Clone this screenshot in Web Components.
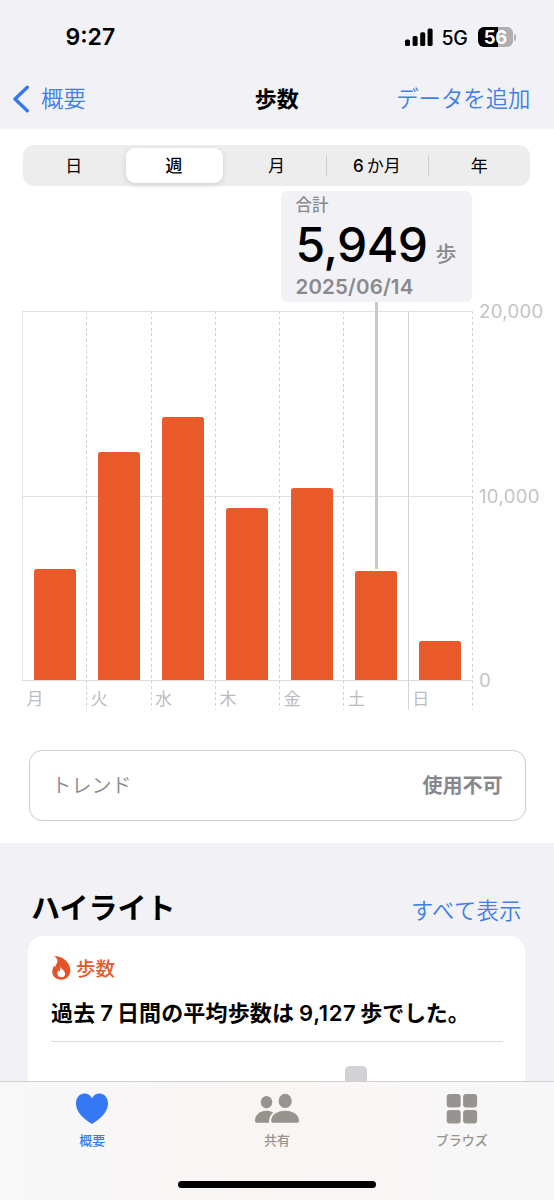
<!DOCTYPE html>
<html lang="ja">
<head>
<meta charset="utf-8">
<title>歩数</title>
<style>
body{margin:0;width:554px;height:1200px;overflow:hidden;background:#f1f1f6;color:#000;font-family:Inter,"Noto Sans CJK JP",sans-serif}
</style>
</head>
<body>
<health-app></health-app>
<script>
const define = (name, html, setup) => customElements.define(name, class extends HTMLElement {
  connectedCallback() {
    if (this.shadowRoot) return;
    const t = document.createElement('template');
    t.innerHTML = html;
    this.attachShadow({mode: 'open'}).append(t.content.cloneNode(true));
    if (setup) setup(this, this.shadowRoot);
  }
});

define('status-bar', `<style>
:host{display:flex;align-items:center;height:74px;padding:0 41px 0 65.5px;box-sizing:border-box}
.time{font-size:23px;font-weight:600;line-height:30px;flex:1}
.signal{margin-right:9px}
.net{font-size:19.5px;font-weight:450;line-height:24px;width:36px;letter-spacing:-.3px;padding-top:1px}
.bat{width:35.5px;height:20px;border-radius:6px;background:linear-gradient(90deg,#000 20px,#aeaeb3 20px);color:#fff;font-size:18.5px;font-weight:700;line-height:20px;text-align:center;letter-spacing:-.5px}
.cap{width:2px;height:7px;border-radius:0 2px 2px 0;background:#b4b4b8;margin-left:1px;margin-right:-3px}
</style>
<span class="time">9:27</span>
<svg class="signal" width="28" height="19" viewBox="0 0 28 19"><rect x="0" y="11.5" width="5" height="6.5" rx="1.6"/><rect x="7.6" y="8" width="5" height="10" rx="1.6"/><rect x="15.2" y="4.3" width="5" height="13.7" rx="1.6"/><rect x="22.6" y=".5" width="5" height="17.5" rx="1.6"/></svg>
<span class="net">5G</span><span class="bat">56</span><span class="cap"></span>`);

define('nav-bar', `<style>
:host{display:grid;grid-template-columns:1fr auto 1fr;align-items:center;height:55px;padding:0 23.5px 6px 12px;box-sizing:border-box;line-height:32px}
.back,.add{color:#3e7fe8;font-size:22.4px;font-weight:350}
.back{display:flex;align-items:center;gap:11px}
.title{font-size:22px;font-weight:600;padding-left:11px}
.add{text-align:right}
</style>
<span class="back"><svg width="18" height="28" viewBox="0 0 18 28" fill="none" stroke="#3478f0" stroke-width="3.3" stroke-linecap="round" stroke-linejoin="round"><path d="M15.3 2.2 3 14l12.3 11.8"/></svg><span>概要</span></span>
<span class="title">歩数</span><span class="add">データを追加</span>`);

define('range-picker', `<style>
:host{display:grid;grid-template-columns:repeat(5,1fr);height:41px;margin:0 24px 0 23px;border-radius:11px;background:#ededee;box-sizing:border-box;font-size:17px;line-height:24px}
span{display:flex;align-items:center;justify-content:center;position:relative}
span:first-child{padding-right:2px}
.on{background:#fff;margin:3px 3px 3px 2px;border-radius:9px;box-shadow:0 2px 6px rgba(0,0,0,.12);font-weight:500;padding-right:1px}
.sep::before{content:"";position:absolute;left:-1px;top:10px;height:21px;width:1px;background:#cfcfd2}
.six{padding-right:2px}
b{font-weight:500;margin-right:3px}
</style><span>日</span><span class="on">週</span><span>月</span><span class="sep six"><b>6</b>か月</span><span class="sep">年</span>`);

define('value-callout', `<style>
:host{display:block;width:191px;height:111px;border-radius:6px;background:#f1f1f6;box-sizing:border-box;padding:4px 0 0 14.5px;color:#8a8a8e;font-weight:500}
.k{font-size:16.5px;line-height:20px}
.v{display:flex;align-items:baseline;height:60px;line-height:60px;font-size:21px;white-space:nowrap}
.v b{font-size:48px;font-weight:460;color:#000;width:140px;letter-spacing:-.5px}
.v span{position:relative;top:-1px}
.d{font-size:20.5px;line-height:24px;font-weight:600;letter-spacing:.15px}
</style><div class="k">合計</div><div class="v"><b>5,949</b><span>歩</span></div><div class="d">2025/06/14</div>`);

define('day-column', `<style>
:host{display:flex;flex-direction:column;box-sizing:border-box;height:399px;background:repeating-linear-gradient(180deg,#d0d0d4 0 2.8px,transparent 2.8px 5.6px) 0 0/1px 100% no-repeat}
:host([line=first]){background:linear-gradient(#e4e4e7,#e4e4e7) 0 0/1px 369px no-repeat}
:host([line=solid]){background:linear-gradient(#d4d4d7,#d4d4d7) 0 0/1px 100% no-repeat}
.plot{flex:none;height:369px;display:flex;align-items:flex-end;padding-left:11.6px}
.bar{width:42px;background:#eb5a2b;border-radius:2.5px 2.5px 0 0}
.day{font-size:17px;line-height:24px;color:#bcbcc0;padding:7px 0 0 4.5px}
</style><div class="plot"><div class="bar"></div></div><div class="day"><slot></slot></div>`,
(el, root) => { root.querySelector('.bar').style.height = el.getAttribute('h') + 'px'; });

define('steps-chart', `<style>
:host{display:grid;grid-template-columns:451px 1fr;height:399px;margin-left:22px;position:relative}
.cols{display:grid;grid-template-columns:repeat(7,64.3px);background:linear-gradient(#e2e2e5,#e2e2e5) 0 0/100% 1px no-repeat,linear-gradient(#e2e2e5,#e2e2e5) 0 185px/100% 1px no-repeat,linear-gradient(#dcdcdf,#dcdcdf) 0 369px/100% 1px no-repeat,repeating-linear-gradient(180deg,#d0d0d4 0 2.8px,transparent 2.8px 5.6px) 450px 0/1px 100% no-repeat}
.axis{display:flex;flex-direction:column;justify-content:space-between;height:393px;margin-top:-12px;padding-left:6px;font-size:18.5px;line-height:24px;color:#c3c3c7;font-weight:440;letter-spacing:.35px}
.pin{position:absolute;left:353px;top:-9px;width:3px;height:267px;background:#c9c9cc}
value-callout{position:absolute;left:259px;top:-120px}
</style><div class="cols">
<day-column line="first" h="111">月</day-column><day-column h="228">火</day-column><day-column h="263">水</day-column><day-column h="172">木</day-column><day-column h="192">金</day-column><day-column h="109">土</day-column><day-column line="solid" h="39">日</day-column></div>
<div class="axis"><span>20,000</span><span>10,000</span><span>0</span></div>
<div class="pin"></div><value-callout></value-callout>`);

define('trend-card', `<style>
:host{display:flex;justify-content:space-between;align-items:center;height:71px;margin:39.5px 28.5px 0;border:1.5px solid #cdcdd1;border-radius:13px;box-sizing:border-box;padding:2px 22px 0;color:#88888c;font-size:20px;line-height:28px}
.a{font-weight:350}.b{font-weight:600}
</style><span class="a">トレンド</span><span class="b">使用不可</span>`);

define('highlight-card', `<style>
:host{display:block;height:145px;margin:0 29px 0 28px;border-radius:15px 15px 0 0;background:#fff;padding:18px 22px 0 24px;box-sizing:border-box}
.h{display:flex;align-items:center;gap:5px;height:28px;color:#e35b2c;font-size:19.5px;font-weight:500}
.h span{margin-top:-2px}
.t{font-size:22px;font-weight:600;line-height:32px;margin:15px 0 0 -1px;padding-bottom:12px;border-bottom:1px solid #dadadd;white-space:nowrap;letter-spacing:.15px}
.n{margin:0 4px 0 5px;letter-spacing:-.1px}
.n.w{margin:0 4px 0 5px;letter-spacing:.6px}
.end{letter-spacing:-.15px}
.chip{width:22px;height:16px;background:#d1d1d6;border-radius:5px 5px 0 0;margin:24px 0 0 293px}
</style><div class="h"><svg width="19" height="24" viewBox="0 0 18.5 23.5"><path fill="#e35428" d="M2.200 0C10 0 17.900 6 17.900 14c0 5.500-3.900 9.300-8.900 9.300S.2 20 .2 15.500C.2 13 1.300 11.300 1.800 9.200c.4 .9 .7 1.400 1.200 1.700C3.600 8.600 5.500 6.800 5.300 5 5.100 3 3.900 1 2.200 0Z"/><path fill="#fff" d="M8.300 10.200c.7 2.900 4.500 3.900 4.500 7.100 0 2.200-1.600 3.500-3.800 3.500s-3.800-1.500-3.800-3.600c0-1.500.3-2.500.8-3.300.3.700.6 1.200 1.200 1.400.7-1.600 1.400-3 1.100-5.100Z"/></svg><span>歩数</span></div>
<div class="t">過去<span class="n">7</span>日間の平均歩数は<span class="n w">9,127</span><span class="end">歩でした。</span></div>
<div class="chip"></div>`);

define('highlight-section', `<style>
:host{display:block;height:238px;background:#f1f1f6;overflow:hidden}
header{display:flex;justify-content:space-between;align-items:center;height:93px;padding:38px 32px 0 31px;box-sizing:border-box}
h2{margin:0;font-size:29px;font-weight:700;line-height:40px}
.all{color:#3e7fe8;font-size:22.3px;font-weight:350;line-height:32px;padding-top:4px;letter-spacing:.4px}
</style><header><h2>ハイライト</h2><span class="all">すべて表示</span></header><highlight-card></highlight-card>`);

define('tab-item', `<style>
:host{display:flex;flex-direction:column;align-items:center;color:#97938f;font-size:13px;font-weight:500;line-height:18px}
::slotted(svg){display:block;margin-bottom:5px}
</style><slot name="icon"></slot><span><slot></slot></span>`);

define('tab-bar', `<style>
:host{display:flex;flex-direction:column;align-items:center;height:119px;border-top:1px solid #cfcfd2;box-sizing:border-box;background:linear-gradient(90deg,#f8f8f9,#f8f5f3 45%,#f9f6f5 65%,#f7f7f9)}
.tabs{display:grid;grid-template-columns:repeat(3,184.7px);height:99px;padding-top:10px;box-sizing:border-box}
.home{width:198px;height:7px;border-radius:4px;background:#000}
tab-item.on{color:#3c7eea}
</style><div class="tabs">
<tab-item class="on"><svg slot="icon" width="46" height="34" viewBox="0 0 46 34"><path fill="#3478f6" d="M23 32C19 29.500 7 22 7 11.500 7 5.500 10.800 1.500 15.500 1.500c3.500 0 6 1.800 7.500 4.800 1.500-3 4-4.800 7.500-4.800C35.200 1.500 39 5.500 39 11.500 39 22 27 29.500 23 32Z"/></svg>概要</tab-item>
<tab-item><svg slot="icon" width="46" height="34" viewBox="0 0 46 34" fill="#97938f"><ellipse cx="12.500" cy="10.200" rx="5.700" ry="6.200"/><path d="M1 28.500C1 23 6 18.800 12.500 18.800c2.700 0 4.600.5 6.700 1.700-2.700 2.500-4 5-4.200 10.300H3C1.700 30.800 1 30 1 28.500Z"/><ellipse cx="31.200" cy="8.900" rx="6.600" ry="7.100"/><path stroke="#f8f5f3" stroke-width="3" paint-order="stroke" d="M17.200 28.800C17.200 23 23 18.800 31.200 18.800S45 23 45 28.800c0 1.400-.8 2-2.100 2H19.300c-1.300 0-2.100-.6-2.100-2Z"/></svg>共有</tab-item>
<tab-item><svg slot="icon" width="46" height="34" viewBox="0 0 46 34" fill="#97938f"><rect x="7.700" y="2" width="14" height="13.500" rx="3"/><rect x="24.100" y="2" width="14" height="13.500" rx="3"/><rect x="7.700" y="18" width="14" height="13.500" rx="3"/><rect x="24.100" y="18" width="14" height="13.500" rx="3"/></svg>ブラウズ</tab-item>
</div><div class="home"></div>`);

define('health-app', `<style>
:host{display:flex;flex-direction:column;height:1200px}
main{height:714px;background:#fff;padding-top:16px;box-sizing:border-box}
steps-chart{margin-top:125px}
</style><status-bar></status-bar><nav-bar></nav-bar>
<main><range-picker></range-picker><steps-chart></steps-chart><trend-card></trend-card></main>
<highlight-section></highlight-section><tab-bar></tab-bar>`);
</script>
</body>
</html>
